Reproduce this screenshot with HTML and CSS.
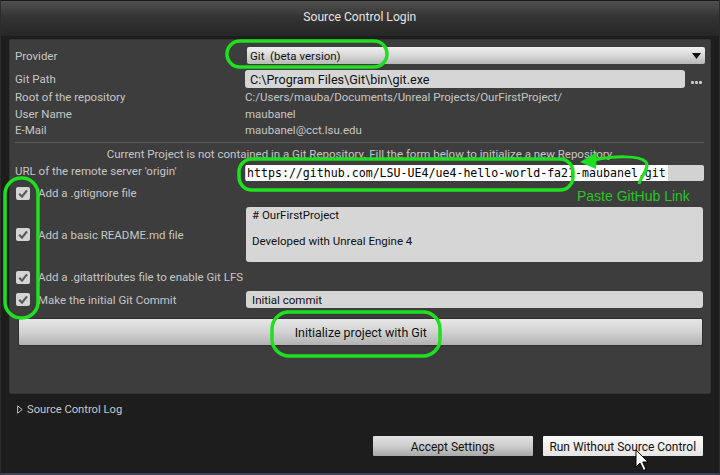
FILE: index.html
```html
<!DOCTYPE html>
<html>
<head>
<meta charset="utf-8">
<link rel="stylesheet" href="styles.css">
</head>
<body>
<div class="window">
  <div class="titlebar"><span class="title">Source Control Login</span></div>
  <div class="body">
    <div class="panel">
      <div class="row row-provider">
        <div class="label">Provider</div>
        <div class="combo"><span>Git&nbsp; (beta version)</span><svg class="combo-arrow" width="9" height="6" viewBox="0 0 9 6"><path d="M0 0H9L4.5 6Z" fill="#111"/></svg></div>
      </div>
      <div class="row row-path">
        <div class="label">Git Path</div>
        <div class="pathwrap">
          <div class="input big">C:\Program Files\Git\bin\git.exe</div>
          <div class="dots"><i></i><i></i><i></i></div>
        </div>
      </div>
      <div class="row info h17"><div class="label">Root of the repository</div><div class="value">C:/Users/mauba/Documents/Unreal Projects/OurFirstProject/</div></div>
      <div class="row info h17"><div class="label">User Name</div><div class="value">maubanel</div></div>
      <div class="row info h16"><div class="label">E-Mail</div><div class="value">maubanel@cct.lsu.edu</div></div>
      <div class="sep"></div>
      <div class="notice">Current Project is not contained in a Git Repository. Fill the form below to initialize a new Repository</div>
      <div class="row row-url">
        <div class="label top">URL of the remote server 'origin'</div>
        <div class="input url"><span class="sel">https://github.com/LSU-UE4/ue4-hello-world-fa21-maubanel.git</span></div>
      </div>
      <div class="row row-check r-ignore">
        <div class="check"><span class="box"><svg width="14" height="13" viewBox="0 0 14 13"><path d="M3.2 6.8L6 9.6L11 3.4" fill="none" stroke="#5a5a5a" stroke-width="2.2"/></svg></span>Add a .gitignore file</div>
      </div>
      <div class="row row-readme">
        <div class="check"><span class="box"><svg width="14" height="13" viewBox="0 0 14 13"><path d="M3.2 6.8L6 9.6L11 3.4" fill="none" stroke="#5a5a5a" stroke-width="2.2"/></svg></span>Add a basic README.md file</div>
        <div class="textarea"># OurFirstProject<br><br>Developed with Unreal Engine 4</div>
      </div>
      <div class="row row-check r-attr">
        <div class="check"><span class="box"><svg width="14" height="13" viewBox="0 0 14 13"><path d="M3.2 6.8L6 9.6L11 3.4" fill="none" stroke="#5a5a5a" stroke-width="2.2"/></svg></span>Add a .gitattributes file to enable Git LFS</div>
      </div>
      <div class="row row-commit">
        <div class="check"><span class="box"><svg width="14" height="13" viewBox="0 0 14 13"><path d="M3.2 6.8L6 9.6L11 3.4" fill="none" stroke="#5a5a5a" stroke-width="2.2"/></svg></span>Make the initial Git Commit</div>
        <div class="input commit">Initial commit</div>
      </div>
      <div class="init"><span>Initialize project with Git</span></div>
    </div>
    <div class="log"><svg width="6" height="9" viewBox="0 0 6 9"><path d="M0.6 0.8L5.2 4.5L0.6 8.2Z" fill="none" stroke="#bdbdbd" stroke-width="1"/></svg><span>Source Control Log</span></div>
    <div class="actions">
      <div class="btn"><span>Accept Settings</span></div>
      <div class="btn hover"><span>Run Without Source Control</span></div>
    </div>
  </div>
  <svg class="overlay" width="720" height="475" viewBox="0 0 720 475">
    <g fill="none" stroke="#1fe01f" stroke-width="3.5">
      <rect x="227" y="41" width="160" height="26" rx="13"/>
      <rect x="239" y="159" width="334" height="31" rx="13"/>
      <rect x="5" y="178" width="33" height="140" rx="16"/>
      <rect x="272" y="312" width="168" height="44" rx="17"/>
      <path d="M639 184C641 176 650 168 646 162C640 155 614 156 594 160" stroke-width="3"/>
    </g>
    <path d="M580 162L597 152L596 169Z" fill="#1fe01f"/>
    <path d="M636 450L636 467L640 463L643.5 470.5L646 469.3L642.7 462L648 462Z" fill="#fff" stroke="#000" stroke-width="1"/>
  </svg>
  <div class="paste">Paste GitHub Link</div>
</div>
</body>
</html>
```
FILE: styles.css
```css
* { box-sizing: border-box; }
html, body { margin: 0; padding: 0; }
body {
  background: #1c1c1c;
  font-family: Roboto, "Liberation Sans", sans-serif;
}
.window {
  position: relative;
  width: 720px;
  height: 475px;
  background: #1d1d1d;
  border-left: 1px solid #2c2c2c;
  border-right: 1px solid #2c2c2c;
  border-bottom: 2px solid #3a4656;
  overflow: hidden;
}
.titlebar {
  height: 36px;
  background: linear-gradient(#505050, #343434 45%, #262626);
  display: flex;
  align-items: center;
  justify-content: center;
  padding-bottom: 5px;
  border-top: 1px solid #1a1a1a;
}
.title {
  color: #e4e4e4;
  font-size: 13.5px;
  display: inline-block;
  transform: scaleX(0.9);
}
.body {
  padding: 3px 8px 0 8px;
}
.panel {
  background: #3d3d3d;
  border: 1px solid #333;
  border-radius: 2px;
  padding: 7px 6px 47px 5px;
}
.row {
  display: grid;
  grid-template-columns: 230px 1fr;
  align-items: center;
}
.label, .value, .check, .notice {
  font-size: 11.5px;
  color: #c6c6c6;
  white-space: nowrap;
}
.label.top { align-self: start; line-height: 12px; }
.row-provider { height: 17px; }
.combo {
  margin-left: 2px;
  margin-right: -1px;
  height: 17px;
  background: linear-gradient(#f0f0f0, #d8d8d8 50%, #b8b8b8);
  border-radius: 2px;
  display: flex;
  align-items: center;
  justify-content: space-between;
  padding: 0 4px 0 3px;
  font-size: 11.5px;
  color: #111;
}
.combo-arrow { display: block; margin-top: 1px; }
.row-path { height: 18px; margin-top: 6px; }
.pathwrap { display: flex; align-items: center; height: 18px; }
.input {
  background: #d6d6d6;
  border-radius: 3px;
  color: #111;
  font-size: 11.5px;
  display: flex;
  align-items: center;
  white-space: nowrap;
  overflow: hidden;
}
.input.big {
  width: 440px;
  height: 18px;
  font-size: 12.6px;
  padding-left: 5px;
}
.dots { display: flex; gap: 1px; margin-left: 6px; margin-top: 6px; }
.dots i { display: block; width: 3px; height: 3px; background: #c8c8c8; border-radius: 1px; }
.info .value { color: #c6c6c6; }
.h17 { height: 17px; }
.h16 { height: 16px; }
.sep { margin-top: 4px; height: 1px; background: #5a5a5a; }
.notice { margin-top: 3px; height: 16px; line-height: 16px; text-align: center; }
.row-url { margin-top: 3px; height: 16px; }
.input.url {
  height: 16px;
  background: #d2d2d2;
  border-radius: 2px;
  padding-left: 1px;
}
.sel {
  background: #fff;
  color: #000;
  font-family: "DejaVu Sans Mono", monospace;
  font-size: 11.6px;
  line-height: 16px;
  padding: 0 2px 0 1px;
}
.check { display: flex; align-items: center; }
.box {
  width: 14px;
  height: 13px;
  margin-left: 1px;
  margin-right: 8px;
  background: #d4d4d4;
  border-radius: 2px;
  display: block;
}
.box svg { display: block; }
.row-check { height: 16px; }
.r-ignore { margin-top: 4px; }
.row-readme { height: 55px; margin-top: 6px; }
.textarea {
  height: 55px;
  margin: 0 1px 0 1px;
  background: #d6d6d6;
  border-radius: 3px;
  color: #111;
  font-size: 11.5px;
  line-height: 13px;
  padding: 2px 6px;
}
.r-attr { margin-top: 7px; }
.row-commit { height: 17px; margin-top: 6px; }
.input.commit { height: 17px; margin: 0 1px; padding-left: 6px; }
.init {
  margin: 10px 1px 0 3px;
  height: 28px;
  background: linear-gradient(#e6e6e6, #d2d2d2 50%, #b2b2b2);
  border: 1px solid #2e2e2e;
  border-radius: 2px;
  display: flex;
  align-items: center;
  justify-content: center;
  color: #111;
  font-size: 13.5px;
}
.init span, .btn span { display: inline-block; transform: scaleX(0.92); }
.log {
  margin-top: 7px;
  height: 16px;
  display: flex;
  align-items: center;
  padding-left: 8px;
  color: #c8c8c8;
  font-size: 11.2px;
}
.log svg { display: block; margin-right: 4px; }
.actions {
  margin-top: 19px;
  display: flex;
  justify-content: flex-end;
  gap: 10px;
  padding-right: 8px;
}
.btn {
  width: 160px;
  height: 20px;
  background: linear-gradient(#e2e2e2, #cdcdcd 50%, #a8a8a8);
  border-radius: 1px;
  display: flex;
  align-items: center;
  justify-content: center;
  color: #111;
  font-size: 13px;
}
.btn.hover { background: linear-gradient(#fafafa, #f0f0f0 50%, #e4e4e4); }
.overlay {
  position: absolute;
  left: -1px;
  top: 0;
  pointer-events: none;
}
.paste {
  position: absolute;
  left: 576px;
  top: 188px;
  font-family: "Liberation Sans", Arial, sans-serif;
  font-size: 14px;
  color: #28c428;
  white-space: nowrap;
}
```
